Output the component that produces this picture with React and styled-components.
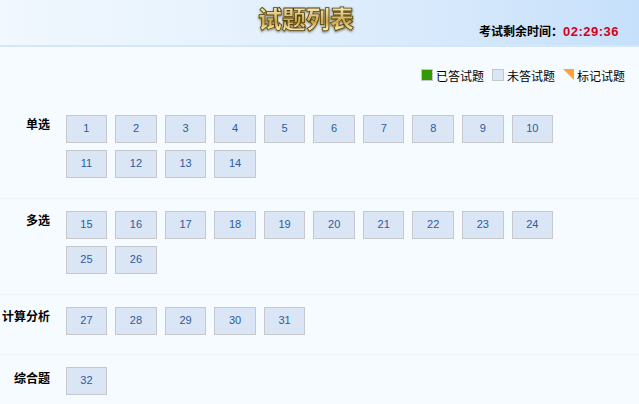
import React from "react";
import styled, { createGlobalStyle } from "styled-components";

const GlobalStyle = createGlobalStyle`
  html, body {
    margin: 0;
    padding: 0;
    background: #f6fbff;
    font-family: "Liberation Sans", "Noto Sans CJK SC", sans-serif;
    overflow: hidden;
  }
`;

const Page = styled.div`
  width: 639px;
  height: 404px;
  overflow: hidden;
`;

const Header = styled.div`
  position: relative;
  height: 45px;
  display: flex;
  justify-content: center;
  padding-right: 27px;
  background: linear-gradient(90deg, #f1f8fe 0%, #e6f2fd 35%, #d9eafc 65%, #c6e0fb 100%);
  border-bottom: 2px solid #d5e6f6;
`;

const Title = styled.h1`
  margin: 3px 0 0;
  font-family: "Noto Sans CJK SC", sans-serif;
  font-size: 24px;
  font-weight: 900;
  line-height: 30px;
  color: transparent;
  background: linear-gradient(180deg, #f7eab8 10%, #c9a445 45%, #f6e8ae 62%, #a5812d 90%);
  -webkit-background-clip: text;
  background-clip: text;
  -webkit-text-stroke: 0.8px #54410f;
  filter: drop-shadow(0 1px 1px rgba(70, 55, 20, 0.6));
`;

const Timer = styled.div`
  position: absolute;
  right: 20px;
  top: 24px;
  font-size: 12px;
  font-weight: 700;
  line-height: 16px;
  color: #000;
`;

const Clock = styled.span`
  color: #d4001a;
  font-size: 13px;
  letter-spacing: 0.5px;
`;

const Legend = styled.div`
  display: flex;
  justify-content: flex-end;
  align-items: center;
  height: 16px;
  margin-top: 20px;
  padding-right: 14px;
  font-size: 12px;
  color: #000;
`;

const LegendItem = styled.div`
  display: flex;
  align-items: center;
  gap: 3px;
  margin-left: 8px;
`;

const Swatch = styled.span`
  width: 10px;
  height: 10px;
  border: 1px solid #c6c6c6;
  background: ${({ $color }) => $color};
`;

const Corner = styled.span`
  width: 0;
  height: 0;
  margin-top: -2px;
  border-top: 11px solid #fda33a;
  border-left: 11px solid transparent;
`;

const SectionList = styled.div`
  margin-top: 24px;
`;

const Section = styled.section`
  display: flex;
  padding-top: ${({ $top }) => $top}px;
  height: ${({ $height }) => $height}px;
  box-sizing: border-box;
  border-bottom: ${({ $last }) => ($last ? "none" : "1px solid #edf3fa")};
`;

const Label = styled.div`
  width: 50px;
  margin-top: ${({ $last }) => ($last ? 4 : 2)}px;
  text-align: right;
  font-size: 12px;
  font-weight: 700;
  line-height: 16px;
  color: #000;
  white-space: nowrap;
`;

const Grid = styled.div`
  display: grid;
  grid-template-columns: repeat(10, 41.56px);
  grid-auto-rows: 27.5px;
  column-gap: 8px;
  row-gap: 7.5px;
  margin-left: 15.65px;
  align-content: start;
`;

const Question = styled.button`
  padding: 0;
  margin: 0;
  box-sizing: border-box;
  border: 1px solid #c6c8cc;
  background: #dae5f5;
  color: #2a5c9e;
  font-family: "Liberation Sans", sans-serif;
  font-size: 11px;
  line-height: 25px;
  text-align: center;
`;

const range = (from, to) =>
  Array.from({ length: to - from + 1 }, (_, i) => from + i);

const sections = [
  { label: "单选", from: 1, to: 14, top: 8, height: 92 },
  { label: "多选", from: 15, to: 26, top: 12, height: 96 },
  { label: "计算分析", from: 27, to: 31, top: 12, height: 60 },
  { label: "综合题", from: 32, to: 32, top: 12, height: 50, last: true },
];

export default function App() {
  return (
    <Page>
      <GlobalStyle />
      <Header>
        <Title>试题列表</Title>
        <Timer>
          考试剩余时间：<Clock>02:29:36</Clock>
        </Timer>
      </Header>
      <Legend>
        <LegendItem>
          <Swatch $color="#339900" />
          已答试题
        </LegendItem>
        <LegendItem>
          <Swatch $color="#dae5f5" />
          未答试题
        </LegendItem>
        <LegendItem>
          <Corner />
          标记试题
        </LegendItem>
      </Legend>
      <SectionList>
        {sections.map((s) => (
          <Section key={s.label} $top={s.top} $height={s.height} $last={s.last}>
            <Label $last={s.last}>{s.label}</Label>
            <Grid>
              {range(s.from, s.to).map((n) => (
                <Question key={n}>{n}</Question>
              ))}
            </Grid>
          </Section>
        ))}
      </SectionList>
    </Page>
  );
}
